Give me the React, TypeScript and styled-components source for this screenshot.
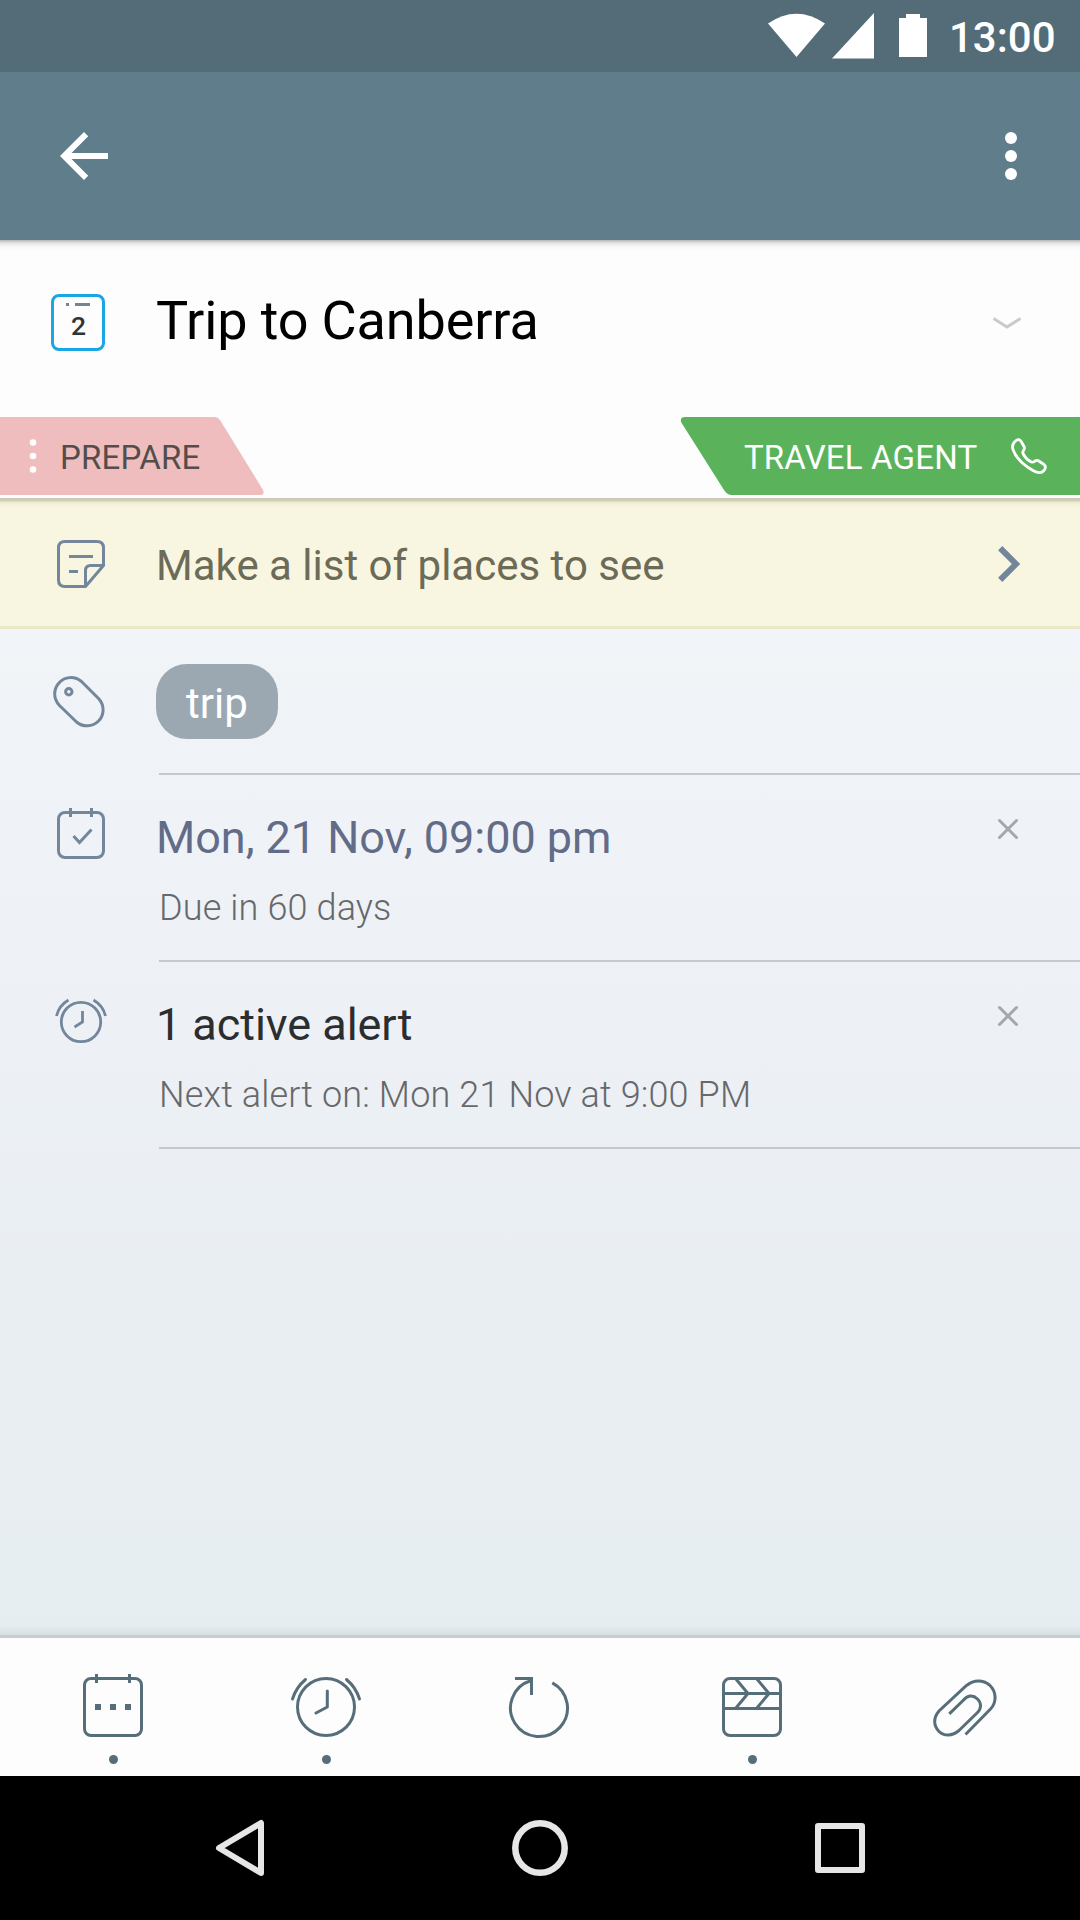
import React from "react";
import styled, { createGlobalStyle } from "styled-components";

const slate = "#73869b";
const tool = "#566e7a";

const GlobalStyle = createGlobalStyle`
  * { box-sizing: border-box; }
  body { margin: 0; background: #fdfdfd; }
  svg { display: block; flex: none; overflow: visible; }
`;

const Screen = styled.div`
  width: 1080px;
  height: 1920px;
  display: flex;
  flex-direction: column;
  overflow: hidden;
  font-family: Roboto, "Liberation Sans", sans-serif;
`;

const StatusBar = styled.header`
  height: 72px;
  flex: none;
  display: flex;
  justify-content: flex-end;
  align-items: flex-start;
  padding: 13px 26px 0 0;
  background: #536c77;
  color: #fff;
`;

const Signal = styled.div`
  margin-left: 7px;
`;

const Battery = styled.div`
  margin: 1px 22px 0 25px;
`;

const Clock = styled.time`
  width: 105px;
  padding-top: 1px;
  font-size: 42px;
  font-weight: 500;
  line-height: 48px;
  white-space: nowrap;
`;

const AppBar = styled.nav`
  height: 168px;
  flex: none;
  display: flex;
  align-items: center;
  justify-content: space-between;
  padding: 0 63px 0 60px;
  background: #607d8b;
`;

const TitleSection = styled.section`
  height: 258px;
  flex: none;
  display: flex;
  flex-direction: column;
  background: linear-gradient(#b4b6b7 0, #e3e4e4 3px, #f8f8f8 7px, #fdfdfd 10px);
`;

const TitleRow = styled.div`
  height: 177px;
  display: flex;
  align-items: center;
  padding: 0 59px 12px 51px;
`;

const Title = styled.h1`
  flex: 1;
  margin: 0 0 4px 51px;
  font-size: 54px;
  font-weight: 400;
  line-height: 64px;
  letter-spacing: -0.14px;
  color: #000;
`;

const Tags = styled.div`
  height: 78px;
  display: flex;
  justify-content: space-between;
`;

const Ribbon = styled.div<{ $width: number }>`
  width: ${(p) => p.$width}px;
  height: 78px;
  display: grid;
  > * { grid-area: 1 / 1; }
`;

const RibbonContent = styled.div<{ $color: string; $start: number }>`
  z-index: 1;
  display: flex;
  align-items: center;
  padding-left: ${(p) => p.$start}px;
  color: ${(p) => p.$color};
  font-size: 33px;
  line-height: 40px;
  letter-spacing: 0.17px;
  white-space: nowrap;
`;

const RibbonLabel = styled.span<{ $width: number; $gap?: number }>`
  width: ${(p) => p.$width}px;
  margin-left: ${(p) => p.$gap ?? 0}px;
  padding-top: 3px;
`;

const NoteRow = styled.section`
  height: 131px;
  flex: none;
  display: flex;
  align-items: center;
  padding: 4px 60px 0 57px;
  border-bottom: 3px solid #ebe8c8;
  background: linear-gradient(#c9c8b4 0, #d2d0b6 3px, #efecd3 4px, #f8f6e1 10px, #f8f6e1 100%);
`;

const NoteText = styled.span`
  flex: 1;
  margin: 3px 0 0 51px;
  font-size: 42px;
  line-height: 50px;
  color: #6c6b58;
`;

const Details = styled.main`
  flex: 1;
  display: flex;
  flex-direction: column;
  background:
    linear-gradient(rgba(200, 208, 211, 0) 0, rgba(190, 198, 201, 0.35) 100%) bottom / 100% 10px no-repeat,
    linear-gradient(#f2f4f9 0, #f0f4f7 40px, #eff3f7 200px, #edf1f6 400px, #e9eef3 680px, #e6edf0 100%);
`;

const Row = styled.div<{ $height: number }>`
  height: ${(p) => p.$height}px;
  display: flex;
  align-items: flex-start;
`;

const IconCell = styled.div<{ $top: number; $left: number }>`
  width: 156px;
  flex: none;
  padding: ${(p) => p.$top}px 0 0 ${(p) => p.$left}px;
`;

const RowBody = styled.div<{ $top: number }>`
  flex: 1;
  align-self: stretch;
  display: flex;
  justify-content: space-between;
  align-items: flex-start;
  margin-left: 3px;
  padding: ${(p) => p.$top}px 62px 0 0;
  border-bottom: 2px solid #c5c9cd;
`;

const Chip = styled.span`
  width: 122px;
  height: 75px;
  margin-left: -3px;
  padding-top: 3px;
  display: flex;
  align-items: center;
  justify-content: center;
  border-radius: 31px;
  background: #9ba8b2;
  color: #fff;
  font-size: 42px;
`;

const Lines = styled.div`
  display: flex;
  flex-direction: column;
`;

const Primary = styled.span<{ $color: string }>`
  margin-left: -3px;
  font-size: 45px;
  line-height: 54px;
  letter-spacing: -0.05px;
  color: ${(p) => p.$color};
`;

const Secondary = styled.span`
  margin-top: 21px;
  font-size: 36px;
  font-weight: 300;
  line-height: 44px;
  letter-spacing: 0.14px;
  color: #66686b;
`;

const Dismiss = styled.div`
  padding-top: 8px;
`;

const Toolbar = styled.footer`
  height: 141px;
  flex: none;
  display: flex;
  padding: 0 8.5px 0 6.5px;
  border-top: 3px solid #c8cdcf;
  background: #fdfdfd;
`;

const Tool = styled.div`
  width: 213px;
  display: flex;
  flex-direction: column;
  align-items: center;
  padding-top: 36px;
`;

const Dot = styled.i`
  width: 9px;
  height: 9px;
  margin-top: 15px;
  border-radius: 50%;
  background: ${tool};
`;

const NavBar = styled.div`
  height: 144px;
  flex: none;
  display: grid;
  grid-template-columns: repeat(3, 300px);
  justify-content: center;
  place-items: center;
  background: #000;
`;

const CloseIcon = () => (
  <svg width="20" height="20" fill="none" stroke="#a6a7a9" strokeWidth="3" strokeLinecap="round">
    <path d="M1.500 1.500 18.500 18.500M18.500 1.500 1.500 18.500" />
  </svg>
);

const tools = [
  {
    name: "schedule",
    dot: true,
    icon: (
      <>
        <rect x="6.5" y="4.5" width="57" height="57" rx="6.5" />
        <path d="M18.5 0v9M51.5 0v9" />
        <path d="M17 33h6M32 33h6M47 33h6" strokeWidth="6" />
      </>
    ),
  },
  {
    name: "alarm",
    dot: true,
    icon: (
      <>
        <circle cx="35" cy="33" r="28.5" />
        <path d="M36.3 17v16l-11.3 6M1.5 25Q5 13.500 14.500 5.500M68.500 25Q65 13.500 55.500 5.500" strokeLinecap="round" strokeLinejoin="round" />
      </>
    ),
  },
  {
    name: "repeat",
    dot: false,
    icon: (
      <>
        <path d="M48.300 8.800A28.500 28.500 0 1 1 26.500 6.800" />
        <path d="M11 4.500h16.500V21" />
      </>
    ),
  },
  {
    name: "actions",
    dot: true,
    icon: (
      <>
        <rect x="6.500" y="4.500" width="57" height="57" rx="6.500" />
        <path d="M6.500 19.500h57M6.500 34.500h57M18.500 4.500l12.500 15-12.500 15M39.500 4.500l12.500 15-12.500 15" />
      </>
    ),
  },
  {
    name: "attach",
    dot: false,
    icon: (
      <path d="M19.300 39.800 32.800 26.800C37.500 21 43 20.500 47.500 25C51.500 29 51.500 34.500 47.500 38.500L29 56.500C22 62.500 14 62.300 9 57.500C3.500 52 3 44 9 37L36.500 11.500C44 5.500 53 5.500 59.500 11C66.500 17.500 67 28 60.500 35L35.500 60.500" />
    ),
  },
];

export default function App() {
  return (
    <Screen>
      <GlobalStyle />
      <StatusBar>
        <svg width="57" height="44" fill="#fff">
          <path d="M0 10.500Q28.500-9 57 10.500L28.500 44Z" />
        </svg>
        <Signal>
          <svg width="42" height="46" fill="#fff">
            <path d="M42 0v45.500H0Z" />
          </svg>
        </Signal>
        <Battery>
          <svg width="28" height="43" fill="#fff">
            <path d="M7 0h14v4h7v39H0V4h7Z" />
          </svg>
        </Battery>
        <Clock>13:00</Clock>
      </StatusBar>

      <AppBar>
        <svg width="48" height="48" viewBox="4 4 16 16" fill="#fff">
          <path d="M20 11H7.830l5.590-5.590L12 4l-8 8 8 8 1.410-1.410L7.830 13H20v-2z" />
        </svg>
        <svg width="12" height="48" fill="#fff">
          <circle cx="6" cy="6" r="6" />
          <circle cx="6" cy="24" r="6" />
          <circle cx="6" cy="42" r="6" />
        </svg>
      </AppBar>

      <TitleSection>
        <TitleRow>
          <svg width="54" height="57">
            <rect x="1.500" y="1.500" width="51" height="54" rx="6.500" fill="none" stroke="#1aa5e4" strokeWidth="3" />
            <path d="M15 10.500h3M24 10.500h15" stroke="#74858f" strokeWidth="3" />
            <text x="27.500" y="41" textAnchor="middle" fontSize="26.500" fontWeight="500" fill="#333">2</text>
          </svg>
          <Title>Trip to Canberra</Title>
          <svg width="28" height="12" fill="none" stroke="#cacaca" strokeWidth="3">
            <path d="M.5 1.500 14 10 27.500 1.500" />
          </svg>
        </TitleRow>
        <Tags>
          <Ribbon $width={264}>
            <svg width="264" height="78">
              <path d="M0 0H215Q218 0 220 3L263 73Q265 78 260 78H0Z" fill="#efbdbd" />
            </svg>
            <RibbonContent $color="#534d4c" $start={30}>
              <svg width="6" height="34" fill="#fff">
                <circle cx="3" cy="3.500" r="3.300" />
                <circle cx="3" cy="17" r="3.300" />
                <circle cx="3" cy="30.500" r="3.300" />
              </svg>
              <RibbonLabel $width={150} $gap={24}>PREPARE</RibbonLabel>
            </RibbonContent>
          </Ribbon>
          <Ribbon $width={399}>
            <svg width="399" height="78">
              <path d="M399 0H4Q-1 0 0 5L43 73Q46 78 51 78H399Z" fill="#5ab35b" />
            </svg>
            <RibbonContent $color="#fff" $start={63}>
              <RibbonLabel $width={267}>TRAVEL AGENT</RibbonLabel>
              <svg width="36" height="36" fill="none" stroke="#fff" strokeWidth="2.800" strokeLinejoin="round">
                <path d="M4.500 3C7 .8 9 1.500 10.500 4L13 8.500C15 12 10.500 12.500 12 15.500C14 19.500 17 22.500 20.500 24C23.500 25.200 23.500 21.500 27 22.500L33 26.500C35.500 28.500 34.500 30.500 33 32.500C30 36 26.500 35 22 32.500C13 27.500 5 20 2 11.500C.7 7.500 1.500 5.500 4.500 3Z" />
              </svg>
            </RibbonContent>
          </Ribbon>
        </Tags>
      </TitleSection>

      <NoteRow>
        <svg width="48" height="48" fill="none" stroke={slate} strokeWidth="3" strokeLinejoin="round">
          <path d="M28.500 46.500H8Q1.500 46.500 1.500 40V8Q1.500 1.500 8 1.500H40Q46.500 1.500 46.500 8V25.500L28.500 46.500V30.500Q28.500 25.500 33.500 25.500H46.500M12 16.500H36M12 31.500H21" />
        </svg>
        <NoteText>Make a list of places to see</NoteText>
        <svg width="22" height="36" fill="none" stroke={slate} strokeWidth="6">
          <path d="M2.200 2.200 18 18 2.200 33.800" />
        </svg>
      </NoteRow>

      <Details>
        <Row $height={146}>
          <IconCell $top={47} $left={53}>
            <svg width="52" height="52" fill="none" stroke={slate} strokeWidth="3">
              <path d="M6.500 29.500C-.5 22 1 13 5.500 7.500C11.500 0 22 0 28.500 5.500L46 23C52 30 51 39.500 45.500 45C39.500 51 30 51.500 23.500 46Z" />
              <circle cx="15.800" cy="15.800" r="3.200" />
            </svg>
          </IconCell>
          <RowBody $top={35}>
            <Chip>trip</Chip>
          </RowBody>
        </Row>
        <Row $height={187}>
          <IconCell $top={33} $left={57}>
            <svg width="48" height="51" fill="none" stroke={slate} strokeWidth="3">
              <rect x="1.500" y="4.500" width="45" height="45" rx="6.500" />
              <path d="M13.500 0v9M34.500 0v9M16.500 28l6 6.500L34.500 21.500" />
            </svg>
          </IconCell>
          <RowBody $top={36}>
            <Lines>
              <Primary $color="#626c88">Mon, 21 Nov, 09:00 pm</Primary>
              <Secondary>Due in 60 days</Secondary>
            </Lines>
            <Dismiss>
              <CloseIcon />
            </Dismiss>
          </RowBody>
        </Row>
        <Row $height={187}>
          <IconCell $top={36} $left={55}>
            <svg width="52" height="45" fill="none" stroke={slate} strokeWidth="2.800">
              <circle cx="26" cy="24" r="19.700" />
              <path d="M27.500 13v11l-8 5M1.500 18Q4 7.500 13.500 2M50.500 18Q48 7.500 38.500 2" />
            </svg>
          </IconCell>
          <RowBody $top={36}>
            <Lines>
              <Primary $color="#2c2d2f">1 active alert</Primary>
              <Secondary>Next alert on: Mon 21 Nov at 9:00 PM</Secondary>
            </Lines>
            <Dismiss>
              <CloseIcon />
            </Dismiss>
          </RowBody>
        </Row>
      </Details>

      <Toolbar>
        {tools.map((t) => (
          <Tool key={t.name}>
            <svg width="70" height="66" fill="none" stroke={tool} strokeWidth="3">
              {t.icon}
            </svg>
            {t.dot && <Dot />}
          </Tool>
        ))}
      </Toolbar>

      <NavBar>
        <svg width="48" height="56" fill="none" stroke="#e6e6e6" strokeWidth="6" strokeLinejoin="round">
          <path d="M45 3V53L3 28Z" />
        </svg>
        <svg width="56" height="56" fill="none" stroke="#e6e6e6" strokeWidth="6.500">
          <circle cx="28" cy="28" r="24.700" />
        </svg>
        <svg width="50" height="50" fill="none" stroke="#e6e6e6" strokeWidth="6" strokeLinejoin="round">
          <rect x="3" y="3" width="44" height="44" />
        </svg>
      </NavBar>
    </Screen>
  );
}
